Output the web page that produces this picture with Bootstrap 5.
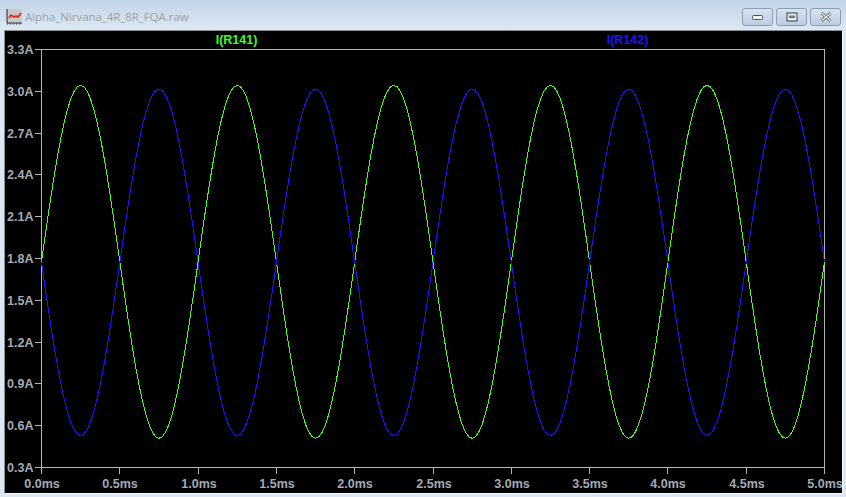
<!DOCTYPE html>
<html lang="en">
<head>
<meta charset="utf-8">
<title>Alpha_Nirvana_4R_8R_FQA.raw</title>
<link href="https://cdn.jsdelivr.net/npm/bootstrap@5.3.0/dist/css/bootstrap.min.css" rel="stylesheet">
<style>
html,body{height:100%;overflow:hidden}
body{background:#dbe7f3}
.win-shell{width:846px;height:497px;background:linear-gradient(180deg,#c3d5e8 0,#dce7f3 30px,#dbe7f3 100%)}
.win-bar{height:30px;padding-left:6px;padding-right:5px}
.win-title{font-family:"Open Sans",sans-serif;font-size:11.4px;color:#9a9fa6;line-height:1;margin-top:4px}
.win-ico{margin-top:4px;margin-right:3px}
.win-btn{width:31px;height:18px;margin-top:4px;border:1px solid #8f9db1;border-radius:3px;background:linear-gradient(180deg,#d6e2ef,#bccde0);padding:0}
.win-btns{gap:3px}
.plot-frame{margin:0 3px 3px 4px;border:1px solid #8a8f96;border-bottom-color:#fff;border-right-color:#fff;height:464px;background:#000}
.plot-svg{display:block;width:837px;height:462px}
.tick-label{font-family:"Liberation Sans",sans-serif;font-weight:700;font-size:12.5px;fill:#a3abb5}
.trace-label{font-family:"Liberation Sans",sans-serif;font-weight:700;font-size:12.5px}
.trace-line{fill:none;stroke-width:1;shape-rendering:crispEdges}
</style>
</head>
<body>
<div class="win-shell d-flex flex-column">
  <div class="win-bar d-flex align-items-center">
    <svg class="win-ico" width="16" height="16" viewBox="0 0 16 16">
      <rect x="1" y="0" width="15" height="13" fill="#c9c9c9"/>
      <path d="M1 0V14H16" fill="none" stroke="#222" stroke-width="1"/>
      <path d="M1 15h15" stroke="#222" stroke-dasharray="1 2"/>
      <path d="M3 9L5 6 8 8 10 7 12 8 15 4" fill="none" stroke="#e0201c" stroke-width="1.6"/>
    </svg>
    <span class="win-title flex-grow-1">Alpha_Nirvana_4R_8R_FQA.raw</span>
    <div class="win-btns d-flex">
      <button class="win-btn d-flex align-items-center justify-content-center" aria-label="Minimize"><svg width="12" height="6" viewBox="0 0 12 6"><rect x=".5" y="1.5" width="10" height="4" rx="1" fill="#f2f4f7" stroke="#4d5560"/></svg></button>
      <button class="win-btn d-flex align-items-center justify-content-center" aria-label="Restore"><svg width="12" height="10" viewBox="0 0 12 10"><rect x="1" y="1" width="10" height="8" fill="#e8edf3" stroke="#4d5560" stroke-width="1.2"/><rect x="3" y="3.5" width="6" height="2.5" fill="#6e7783"/></svg></button>
      <button class="win-btn d-flex align-items-center justify-content-center" aria-label="Close"><svg width="12" height="10" viewBox="0 0 12 10"><path d="M1.5 1L10.5 9M10.5 1L1.5 9" stroke="#59616c" stroke-width="3"/><path d="M1.5 1L10.5 9M10.5 1L1.5 9" stroke="#f4f6f8" stroke-width="1.2"/></svg></button>
    </div>
  </div>
  <div class="plot-frame">
    <svg class="plot-svg" id="plot" viewBox="5 31 837 462" xmlns="http://www.w3.org/2000/svg"></svg>
  </div>
</div>
<script src="https://cdn.jsdelivr.net/npm/bootstrap@5.3.0/dist/js/bootstrap.bundle.min.js"></script>
<script>
(function(){
  var L=41.5,R=824.5,T=49.5,B=467.5,s=document.getElementById('plot'),h='';
  var ax='#b4b4b4';
  h+='<rect x="'+L+'" y="'+T+'" width="'+(R-L)+'" height="'+(B-T)+'" fill="none" stroke="'+ax+'" shape-rendering="crispEdges"/>';
  ['3.3A','3.0A','2.7A','2.4A','2.1A','1.8A','1.5A','1.2A','0.9A','0.6A','0.3A'].forEach(function(t,i){
    var y=Math.round(T+(B-T)*i/10-.5)+.5;
    h+='<path d="M34.5 '+y+'H'+L+'" stroke="'+ax+'" shape-rendering="crispEdges"/>';
    h+='<text class="tick-label" x="33.5" y="'+(y+4.5)+'" text-anchor="end">'+t+'</text>';
  });
  for(var i=0;i<=10;i++){
    var x=Math.round(L+(R-L)*i/10-.5)+.5;
    h+='<path d="M'+x+' '+B+'V474" stroke="'+ax+'" shape-rendering="crispEdges"/>';
    h+='<text class="tick-label" x="'+(x+.5)+'" y="488" text-anchor="middle">'+(i/2).toFixed(1)+'ms</text>';
  }
  h+='<text class="trace-label" x="236.5" y="43.5" text-anchor="middle" fill="#3fff1f">I(R141)</text>';
  h+='<text class="trace-label" x="627.5" y="43.5" text-anchor="middle" fill="#2211ff">I(R142)</text>';
  function wave(c,a,sign,col){
    var p=[];
    for(var k=0;k<=240;k++){
      var t=k/240, x=L+(R-L)*t;
      p.push(x.toFixed(2)+','+(c-sign*a*Math.sin(2*Math.PI*5*t)).toFixed(2));
    }
    return '<polyline class="trace-line" stroke="'+col+'" points="'+p.join(' ')+'"/>';
  }
  h+=wave(261.8,176.5,1,'#48ff1c');
  h+=wave(262.3,173.2,-1,'#2211ff');
  s.innerHTML=h;
})();
</script>
</body>
</html>
